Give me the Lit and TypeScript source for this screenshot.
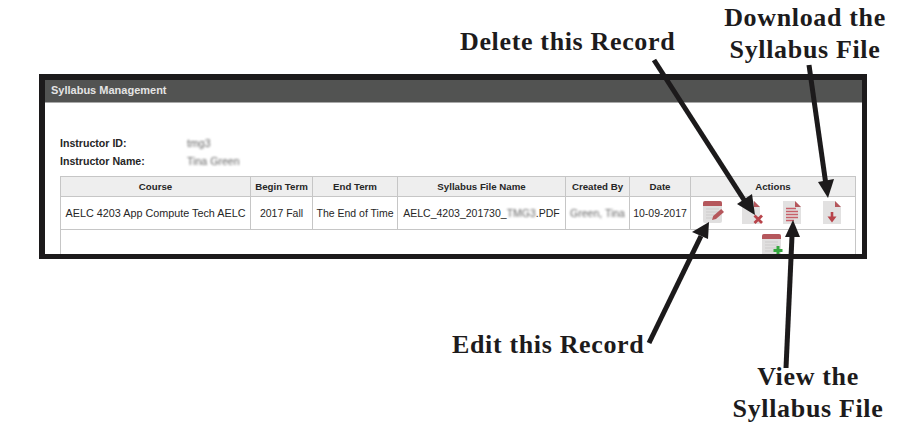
import { LitElement, html, css, svg } from "lit";
import { customElement } from "lit/decorators.js";

const RED = "#b5575c";
const arrows: { line: number[]; head: number[] }[] = [
  { line: [654, 60, 746, 203], head: [755, 215, 737, 204, 752, 194] },
  { line: [809, 65, 826, 185], head: [828, 198, 818, 182, 834, 179] },
  { line: [649, 343, 701, 236], head: [709, 222, 692, 232, 708, 239] },
  { line: [786, 368, 792, 236], head: [793, 220, 785, 237, 800, 237] },
];

const sheet = (children: unknown) => svg`
  <path d="M0 1h12l6 6v17H0z" fill="#e2e1e1"/>
  <path d="M12 1l6 6h-6z" fill="${RED}"/>
  ${children}`;

const notepad = (children: unknown) => svg`
  <rect x="1" y="1" width="19" height="22" rx="2" fill="#e0dfdf"/>
  <path d="M1 6V3a2 2 0 0 1 2-2h15a2 2 0 0 1 2 2v3z" fill="${RED}"/>
  <path d="M4 9h13M4 12h13M4 15h11M4 18h9" stroke="#cdcbcb" stroke-width="1"/>
  ${children}`;

const editIcon = svg`<svg class="icon" width="24" height="24" viewBox="0 0 24 24">${notepad(
  svg`<path d="M10 20l1.2-4 8-7 2.8 3-8 7z" fill="${RED}"/>`
)}</svg>`;
const deleteIcon = svg`<svg class="icon" width="23" height="24" viewBox="0 0 23 24">${sheet(
  svg`<path d="M12.5 15.5l7.5 7.5M20 15.5l-7.5 7.5" stroke="#b8434a" stroke-width="2.8"/>`
)}</svg>`;
const viewIcon = svg`<svg class="icon" width="18" height="24" viewBox="0 0 18 24">${sheet(
  svg`<path d="M3 8.5h10M3 11.5h12M3 14.5h12M3 17.5h12M3 20.5h8" stroke="#c8606a" stroke-width="1.7"/>`
)}</svg>`;
const downloadIcon = svg`<svg class="icon" width="18" height="24" viewBox="0 0 18 24">${sheet(
  svg`<path d="M9 12v6" stroke="#b8434a" stroke-width="2.6"/><path d="M4.5 16.5h9L9 22.5z" fill="#b8434a"/>`
)}</svg>`;
const addIcon = svg`<svg class="icon" width="24" height="24" viewBox="0 0 24 24">${notepad(
  svg`<path d="M17 13v9M12.5 17.5h9" stroke="#35a83f" stroke-width="3"/>`
)}</svg>`;

@customElement("app-root")
export class AppRoot extends LitElement {
  static styles = css`
    :host {
      display: block;
      position: relative;
      width: 899px;
      height: 426px;
      overflow: hidden;
      background: #fff;
      font-family: "Liberation Sans", Arial, sans-serif;
      color: #262626;
    }
    .page {
      padding: 74px 0 0 39px;
    }
    .frame {
      box-sizing: border-box;
      width: 828px;
      height: 185px;
      border: 6px solid #1c1a1b;
      border-right-width: 5px;
      border-bottom-width: 5px;
      overflow: hidden;
      background: #fff;
    }
    .bar {
      height: 23px;
      background: #525352;
      border-bottom: 1px solid #a9a9a9;
      box-sizing: border-box;
      padding-left: 6px;
      line-height: 21px;
      font-size: 11px;
      font-weight: bold;
      color: #e4e4e4;
    }
    .info {
      display: grid;
      grid-template-columns: 127px auto;
      grid-auto-rows: 18px;
      padding: 31px 0 0 15px;
      font-size: 10.6px;
      line-height: 18px;
      font-weight: bold;
    }
    .blur {
      filter: blur(1px);
      color: #666;
      font-weight: normal;
    }
    table {
      border-collapse: collapse;
      table-layout: fixed;
      width: 795px;
      margin: 6px 0 0 15px;
      font-size: 10.5px;
    }
    th,
    td {
      border: 1px solid #c6c6c6;
      padding: 0;
      text-align: center;
      white-space: nowrap;
      overflow: hidden;
    }
    th {
      height: 19px;
      background: #eeeeee;
      font-weight: bold;
      font-size: 9.7px;
    }
    .row td {
      height: 32px;
    }
    .row .course {
      font-size: 10.8px;
    }
    .add td {
      height: 40px;
      vertical-align: top;
      padding-top: 3px;
      padding-left: 700px;
      text-align: left;
    }
    .actions {
      display: flex;
      align-items: flex-start;
      padding: 2px 0 0 11px;
      height: 30px;
      box-sizing: border-box;
    }
    .actions .a {
      margin-left: 16px;
    }
    .actions .b {
      margin-left: 18px;
    }
    .actions .c {
      margin-left: 22px;
    }
    .icon {
      display: block;
      flex: none;
    }
    .overlay {
      position: absolute;
      inset: 0;
      pointer-events: none;
    }
    .note {
      position: absolute;
      font-family: "Liberation Serif", "Times New Roman", serif;
      font-weight: bold;
      font-size: 26px;
      line-height: 32px;
      letter-spacing: 0.65px;
      color: #1d1b1c;
      text-align: center;
      white-space: nowrap;
    }
    .delete {
      left: 460px;
      top: 26px;
    }
    .download {
      left: 705px;
      top: 2px;
      width: 200px;
    }
    .edit {
      left: 452px;
      top: 329px;
    }
    .view {
      left: 708px;
      top: 361px;
      width: 200px;
    }
  `;

  render() {
    return html`
      <div class="page">
        <div class="frame">
          <div class="bar">Syllabus Management</div>
          <div class="info">
            <span>Instructor ID:</span><span class="blur">tmg3</span>
            <span>Instructor Name:</span><span class="blur">Tina Green</span>
          </div>
          <table>
            <colgroup>
              <col style="width:190px" /><col style="width:62px" /><col style="width:85px" /><col
                style="width:168px"
              /><col style="width:64px" /><col style="width:61px" /><col style="width:165px" />
            </colgroup>
            <tr>
              <th>Course</th>
              <th>Begin Term</th>
              <th>End Term</th>
              <th>Syllabus File Name</th>
              <th>Created By</th>
              <th>Date</th>
              <th>Actions</th>
            </tr>
            <tr class="row">
              <td class="course">AELC 4203 App Compute Tech AELC</td>
              <td>2017 Fall</td>
              <td>The End of Time</td>
              <td>AELC_4203_201730_<span class="blur">TMG3</span>.PDF</td>
              <td><span class="blur">Green, Tina</span></td>
              <td>10-09-2017</td>
              <td>
                <div class="actions">
                  ${editIcon}
                  <span class="a">${deleteIcon}</span>
                  <span class="b">${viewIcon}</span>
                  <span class="c">${downloadIcon}</span>
                </div>
              </td>
            </tr>
            <tr class="add">
              <td colspan="7">${addIcon}</td>
            </tr>
          </table>
        </div>
      </div>
      <svg class="overlay" width="899" height="426" viewBox="0 0 899 426">
        ${arrows.map(
          (a) => svg`
            <line x1=${a.line[0]} y1=${a.line[1]} x2=${a.line[2]} y2=${a.line[3]}
              stroke="#1c1a1b" stroke-width="5"/>
            <polygon points=${a.head.join(" ")} fill="#1c1a1b"/>`
        )}
      </svg>
      <div class="overlay">
        <div class="note delete">Delete this Record</div>
        <div class="note download">Download the<br />Syllabus File</div>
        <div class="note edit">Edit this Record</div>
        <div class="note view">View the<br />Syllabus File</div>
      </div>
    `;
  }
}
